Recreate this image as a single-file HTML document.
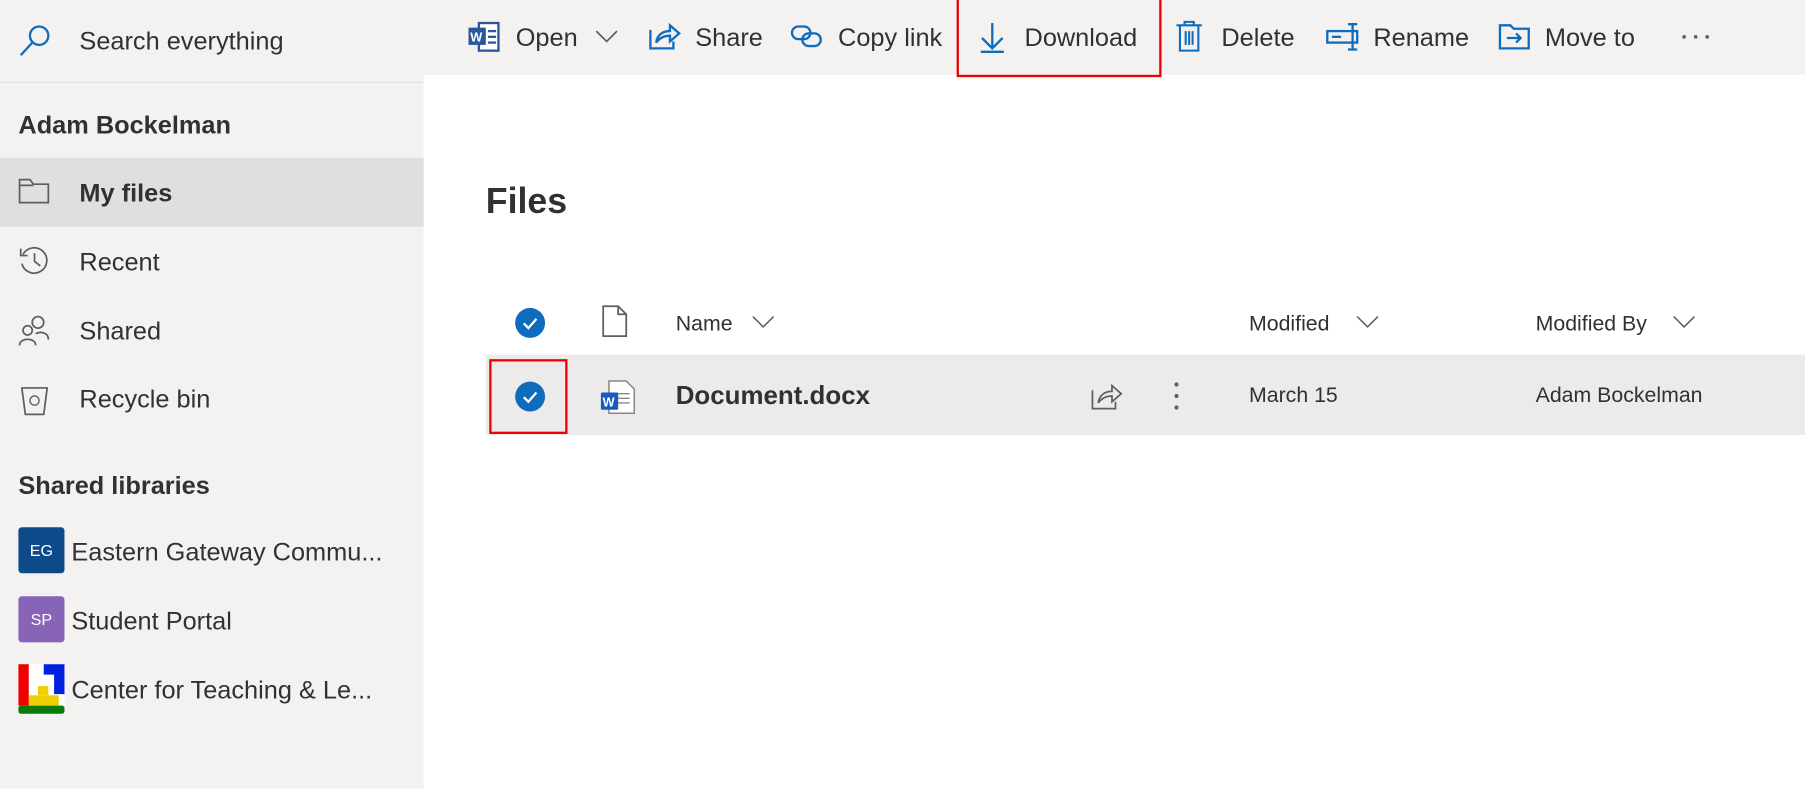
<!DOCTYPE html>
<html><head><meta charset="utf-8"><style>
html,body{margin:0;padding:0;width:1805px;height:788px;overflow:hidden;background:#fff;font-family:"Liberation Sans",sans-serif;color:#323130}
#w{position:absolute;left:0;top:0;width:1568px;height:685px;transform:scale(1.15115);transform-origin:0 0}
.a{position:absolute;white-space:nowrap}
.side{position:absolute;left:0;top:0;width:368px;height:685px;background:#f3f2f1}
.top{position:absolute;left:368px;top:0;width:1200px;height:65px;background:#f3f2f1}
.t{font-size:22px;color:#323130}
svg{position:absolute;overflow:visible}
</style></head><body><div id="w">
<div class="side"></div><div class="top"></div>
<div class="a" style="left:0;top:71px;width:368px;height:1px;background:#e1dfdd"></div>

<svg style="left:16px;top:20px" width="30" height="30"><circle cx="18" cy="11" r="8" fill="none" stroke="#0f6cbd" stroke-width="2"/><line x1="12" y1="17" x2="2" y2="28" stroke="#0f6cbd" stroke-width="2"/></svg>
<div class="a t" style="left:69px;top:23px">Search everything</div>

<svg style="left:407px;top:19px" width="28" height="26"><rect x="9" y="1" width="17" height="24" fill="#fff" stroke="#2b579a" stroke-width="2"/><line x1="17" y1="8" x2="24" y2="8" stroke="#2b579a" stroke-width="2"/><line x1="17" y1="13" x2="24" y2="13" stroke="#2b579a" stroke-width="2"/><line x1="17" y1="18" x2="24" y2="18" stroke="#2b579a" stroke-width="2"/><rect x="0" y="5" width="15" height="15" fill="#2b579a"/><text x="1.5" y="17" font-size="11" font-weight="bold" fill="#fff" font-family="Liberation Sans">W</text></svg>
<div class="a t" style="left:448px;top:20px">Open</div>
<svg style="left:517px;top:26px" width="20" height="12"><path d="M1 1 L10 10 L19 1" fill="none" stroke="#605e5c" stroke-width="1.5"/></svg>
<svg style="left:563px;top:18px" width="28" height="26"><path d="M2 8 V24 H22 V18" fill="none" stroke="#0f6cbd" stroke-width="2"/><path d="M7 19 C8 12 13 9 19 9 V4 L27 11 L19 18 V13 C14 13 10 15 7 19Z" fill="none" stroke="#0f6cbd" stroke-width="2"/></svg>
<div class="a t" style="left:604px;top:20px">Share</div>
<svg style="left:687px;top:20px" width="28" height="24"><rect x="1" y="3" width="16" height="11" rx="5.5" fill="none" stroke="#0f6cbd" stroke-width="2"/><rect x="10" y="9" width="16" height="11" rx="5.5" fill="none" stroke="#0f6cbd" stroke-width="2"/></svg>
<div class="a t" style="left:728px;top:20px">Copy link</div>
<div class="a" style="left:831px;top:-2px;width:178px;height:69px;border:2px solid #e00;box-sizing:border-box"></div>
<svg style="left:850px;top:18px" width="24" height="28"><path d="M12 2 V24 M3 15 L12 24 L21 15" fill="none" stroke="#0f6cbd" stroke-width="2"/><line x1="2" y1="27" x2="22" y2="27" stroke="#0f6cbd" stroke-width="2"/></svg>
<div class="a t" style="left:890px;top:20px">Download</div>
<svg style="left:1021px;top:17px" width="24" height="28"><path d="M1 5 H23 M8 5 V2 H16 V5 M4 5 V27 H20 V5 M9 10 V22 M12 10 V22 M15 10 V22" fill="none" stroke="#0f6cbd" stroke-width="1.8"/></svg>
<div class="a t" style="left:1061px;top:20px">Delete</div>
<svg style="left:1152px;top:20px" width="32" height="24"><rect x="1" y="7" width="26" height="10" fill="none" stroke="#0f6cbd" stroke-width="2"/><rect x="5" y="11" width="8" height="2" fill="#0f6cbd"/><path d="M23 1 V23 M19 1 H27 M19 23 H27" stroke="#0f6cbd" stroke-width="2"/></svg>
<div class="a t" style="left:1193px;top:20px">Rename</div>
<svg style="left:1301px;top:20px" width="30" height="24"><path d="M2 2 H11 L14 5 H27 V22 H2 Z" fill="none" stroke="#0f6cbd" stroke-width="2"/><path d="M8 13 H20 M16 9 L20 13 L16 17" fill="none" stroke="#0f6cbd" stroke-width="2"/></svg>
<div class="a t" style="left:1342px;top:20px">Move to</div>
<svg style="left:1461px;top:30px" width="26" height="4"><circle cx="2" cy="2" r="1.6" fill="#605e5c"/><circle cx="12" cy="2" r="1.6" fill="#605e5c"/><circle cx="22" cy="2" r="1.6" fill="#605e5c"/></svg>

<div class="a t" style="left:16px;top:96px;font-weight:bold">Adam Bockelman</div>
<div class="a" style="left:0;top:137px;width:368px;height:60px;background:#e1dfdd"></div>
<svg style="left:16px;top:155px" width="28" height="22"><path d="M1 1 H10 L13 5 H26 V21 H1 Z M1 6 H13" fill="none" stroke="#605e5c" stroke-width="1.5"/></svg>
<div class="a t" style="left:69px;top:155px;font-weight:bold">My files</div>
<svg style="left:16px;top:213px" width="28" height="28"><path d="M4 8 A11 11 0 1 1 3 16" fill="none" stroke="#605e5c" stroke-width="1.5"/><path d="M2 3 V9 H8" fill="none" stroke="#605e5c" stroke-width="1.5"/><path d="M14 7 V14 L19 18" fill="none" stroke="#605e5c" stroke-width="1.5"/></svg>
<div class="a t" style="left:69px;top:215px">Recent</div>
<svg style="left:16px;top:273px" width="28" height="28"><circle cx="17" cy="7" r="5" fill="none" stroke="#605e5c" stroke-width="1.5"/><circle cx="8" cy="14" r="4" fill="none" stroke="#605e5c" stroke-width="1.5"/><path d="M1 27 C1 20 15 20 15 27 M15 17 C18 15 26 15 26 22" fill="none" stroke="#605e5c" stroke-width="1.5"/></svg>
<div class="a t" style="left:69px;top:275px">Shared</div>
<svg style="left:18px;top:333px" width="24" height="28"><path d="M1 4 H23 L20 27 H4 Z" fill="none" stroke="#605e5c" stroke-width="1.5"/><circle cx="12" cy="15" r="4" fill="none" stroke="#605e5c" stroke-width="1.2"/></svg>
<div class="a t" style="left:69px;top:334px">Recycle bin</div>
<div class="a t" style="left:16px;top:409px;font-weight:bold">Shared libraries</div>
<div class="a" style="left:16px;top:458px;width:40px;height:40px;background:#0c4a8a;border-radius:3px;color:#fff;font-size:14px;text-align:center;line-height:40px">EG</div>
<div class="a t" style="left:62px;top:467px">Eastern Gateway Commu...</div>
<div class="a" style="left:16px;top:518px;width:40px;height:40px;background:#8764b8;border-radius:3px;color:#fff;font-size:14px;text-align:center;line-height:40px">SP</div>
<div class="a t" style="left:62px;top:527px">Student Portal</div>
<svg style="left:16px;top:577px" width="40" height="40"><rect width="40" height="40" rx="3" fill="#fff"/><rect x="0" y="0" width="9" height="36" fill="#e00"/><path d="M22 0 H40 V26 H31 V9 H22 Z" fill="#0020e0"/><rect x="17" y="19" width="9" height="8" fill="#f0d000"/><rect x="9" y="27" width="26" height="9" fill="#f0d000"/><rect x="0" y="36" width="40" height="7" rx="2" fill="#0a7a0a"/></svg>
<div class="a t" style="left:62px;top:587px">Center for Teaching &amp; Le...</div>

<div class="a" style="left:422px;top:157px;font-size:31px;font-weight:bold">Files</div>
<svg style="left:447px;top:267px" width="27" height="27"><circle cx="13.5" cy="13.5" r="13" fill="#0f6cbd"/><path d="M8 14 L12 18 L19 10" fill="none" stroke="#fff" stroke-width="2"/></svg>
<svg style="left:523px;top:265px" width="22" height="28"><path d="M1 1 H14 L21 8 V27 H1 Z M14 1 V8 H21" fill="none" stroke="#605e5c" stroke-width="1.5"/></svg>
<div class="a" style="left:587px;top:270px;font-size:18.5px">Name</div>
<svg style="left:653px;top:274px" width="20" height="12"><path d="M1 1 L10 10 L19 1" fill="none" stroke="#605e5c" stroke-width="1.3"/></svg>
<div class="a" style="left:1085px;top:270px;font-size:18.5px">Modified</div>
<svg style="left:1178px;top:274px" width="20" height="12"><path d="M1 1 L10 10 L19 1" fill="none" stroke="#605e5c" stroke-width="1.3"/></svg>
<div class="a" style="left:1334px;top:270px;font-size:18.5px">Modified By</div>
<svg style="left:1453px;top:274px" width="20" height="12"><path d="M1 1 L10 10 L19 1" fill="none" stroke="#605e5c" stroke-width="1.3"/></svg>

<div class="a" style="left:422px;top:308px;width:1146px;height:70px;background:#edebe9"></div>
<div class="a" style="left:425px;top:312px;width:68px;height:65px;border:2px solid #e00;box-sizing:border-box"></div>
<svg style="left:447px;top:331px" width="27" height="27"><circle cx="13.5" cy="13.5" r="13" fill="#0f6cbd"/><path d="M8 14 L12 18 L19 10" fill="none" stroke="#fff" stroke-width="2"/></svg>
<svg style="left:521px;top:330px" width="32" height="30"><path d="M8 1 H23 L30 8 V29 H8 Z" fill="#fff" stroke="#8a8886" stroke-width="1.3"/><path d="M14 12 H26 M14 16 H26 M14 20 H26" stroke="#8a8886" stroke-width="1.2"/><rect x="1" y="11" width="15" height="15" rx="1" fill="#185abd"/><text x="2.5" y="23" font-size="11" font-weight="bold" fill="#fff" font-family="Liberation Sans">W</text></svg>
<div class="a" style="left:587px;top:331px;font-size:22.5px;font-weight:bold">Document.docx</div>
<svg style="left:947px;top:331px" width="28" height="26"><path d="M2 8 V24 H22 V18" fill="none" stroke="#605e5c" stroke-width="1.5"/><path d="M7 19 C8 12 13 9 19 9 V4 L27 11 L19 18 V13 C14 13 10 15 7 19Z" fill="none" stroke="#605e5c" stroke-width="1.5"/></svg>
<svg style="left:1019px;top:331px" width="6" height="26"><circle cx="3" cy="3" r="1.8" fill="#605e5c"/><circle cx="3" cy="13" r="1.8" fill="#605e5c"/><circle cx="3" cy="23" r="1.8" fill="#605e5c"/></svg>
<div class="a" style="left:1085px;top:332px;font-size:18.5px">March 15</div>
<div class="a" style="left:1334px;top:332px;font-size:18.5px">Adam Bockelman</div>
</div></body></html>
